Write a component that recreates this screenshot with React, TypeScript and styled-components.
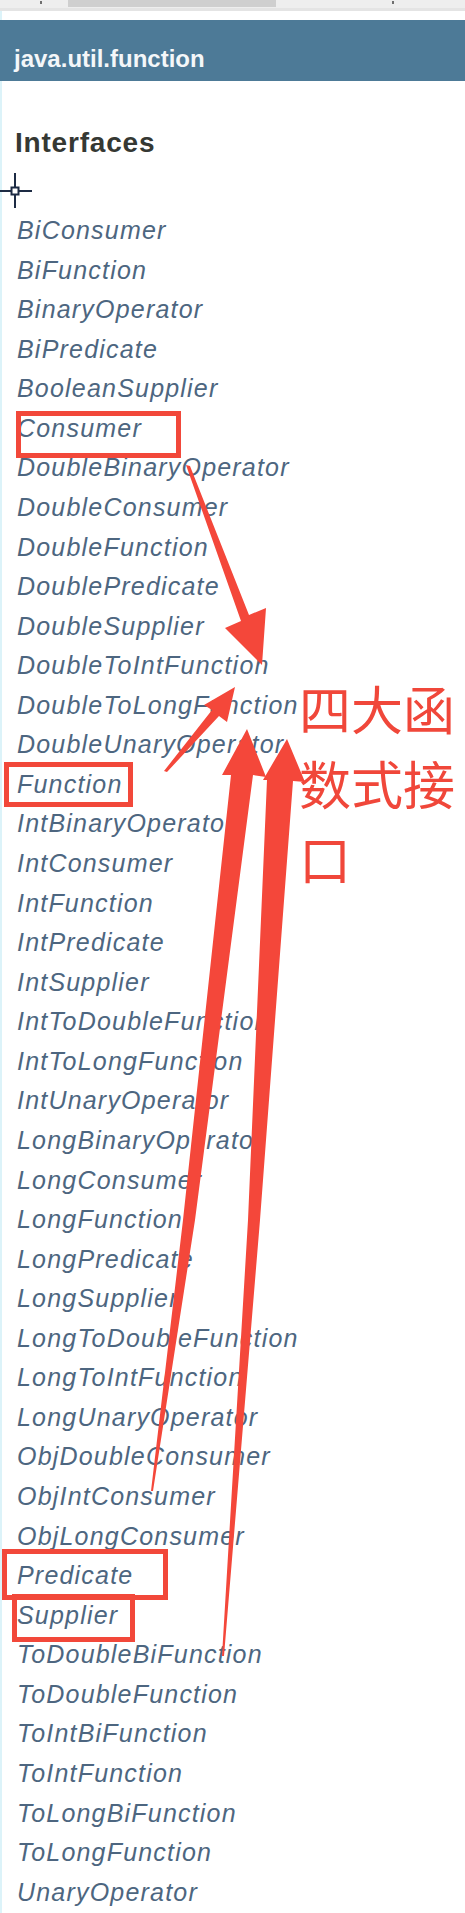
import * as React from 'react';
import styled, { createGlobalStyle } from 'styled-components';

// javadoc package frame for java.util.function, with the red annotations on top

const GlobalStyle = createGlobalStyle`
  html,
  body {
    margin: 0;
    padding: 0;
    background: #ffffff;
  }
  body {
    font-family: "Liberation Sans", Arial, sans-serif;
  }
`;

const Page = styled.div`
  position: relative;
  width: 465px;
  height: 1913px;
  overflow: hidden;
  background: #ffffff;
  box-shadow: inset 2px 0 0 #dcf3f9;
`;

const ScrollTrack = styled.div`
  display: flex;
  align-items: flex-start;
  height: 8px;
  background: #eeeeee;
  border-bottom: 3px solid #e4e4e4;
`;

const ScrollDot = styled.span<{ $ml: number }>`
  width: 2px;
  height: 3px;
  margin-left: ${(p) => p.$ml}px;
  margin-top: 1px;
  background: #6f6f6f;
`;

const ScrollThumb = styled.span`
  width: 208px;
  height: 7px;
  margin-left: 26px;
  background: #cfcfcf;
`;

const Bar = styled.div`
  box-sizing: border-box;
  height: 61px;
  margin-top: 9px;
  padding: 25px 0 0 14px;
  background: #4d7a97;
  color: #f4f7f9;
  font-size: 24px;
  font-weight: bold;
  line-height: 27px;
`;

const Title = styled.h2`
  margin: 46px 0 0;
  padding-left: 15px;
  color: #353833;
  font-size: 28px;
  font-weight: bold;
  line-height: 32px;
  letter-spacing: 0.8px;
`;

const List = styled.ul`
  margin: 52px 0 0;
  padding: 0;
  list-style: none;
`;

const Item = styled.li`
  position: relative;
  padding-left: 17px;
  height: 39.57px;
  color: #4d6680;
  font-size: 25px;
  font-style: italic;
  line-height: 39.57px;
  letter-spacing: 1.2px;
  white-space: nowrap;
`;

const Highlight = styled.span<{ $l: number; $t: number; $w: number; $h: number }>`
  position: absolute;
  left: ${(p) => p.$l}px;
  top: ${(p) => p.$t}px;
  width: ${(p) => p.$w}px;
  height: ${(p) => p.$h}px;
  box-sizing: border-box;
  border: 5px solid #f2483a;
  z-index: 2;
`;

const Cursor = styled.svg`
  position: absolute;
  left: 0;
  top: 173px;
`;

const Arrows = styled.svg`
  position: absolute;
  left: 0;
  top: 0;
  z-index: 3;
  pointer-events: none;
`;

const Note = styled.div`
  position: absolute;
  left: 299px;
  top: 670px;
  width: 165px;
  z-index: 4;
  color: #f0473a;
  font-family: "Noto Sans CJK SC", "Noto Sans", sans-serif;
  font-size: 52px;
  line-height: 75px;
`;

type Box = { l: number; t: number; w: number; h: number };

const boxes: Record<string, Box> = {
  Consumer: { l: 16, t: 2, w: 165, h: 47 },
  Function: { l: 4, t: -2.5, w: 129, h: 45 },
  Predicate: { l: 2, t: -7, w: 166, h: 51 },
  Supplier: { l: 12, t: -1.5, w: 123, h: 48 },
};

const interfaces = [
  'BiConsumer',
  'BiFunction',
  'BinaryOperator',
  'BiPredicate',
  'BooleanSupplier',
  'Consumer',
  'DoubleBinaryOperator',
  'DoubleConsumer',
  'DoubleFunction',
  'DoublePredicate',
  'DoubleSupplier',
  'DoubleToIntFunction',
  'DoubleToLongFunction',
  'DoubleUnaryOperator',
  'Function',
  'IntBinaryOperator',
  'IntConsumer',
  'IntFunction',
  'IntPredicate',
  'IntSupplier',
  'IntToDoubleFunction',
  'IntToLongFunction',
  'IntUnaryOperator',
  'LongBinaryOperator',
  'LongConsumer',
  'LongFunction',
  'LongPredicate',
  'LongSupplier',
  'LongToDoubleFunction',
  'LongToIntFunction',
  'LongUnaryOperator',
  'ObjDoubleConsumer',
  'ObjIntConsumer',
  'ObjLongConsumer',
  'Predicate',
  'Supplier',
  'ToDoubleBiFunction',
  'ToDoubleFunction',
  'ToIntBiFunction',
  'ToIntFunction',
  'ToLongBiFunction',
  'ToLongFunction',
  'UnaryOperator',
];

// tapered brush arrows, page coordinates
const arrowShapes = [
  '186,465 190,466 249,615 266,608 262,665 225,628 241,621',
  '164,771 167,772 219,716 227,722 235,687 204,705 212,710',
  '151,1491 153,1491 195,1220 253,775 266,777 247,729 222,775 231,775 183,1220',
  '222,1656 224,1656 260,1220 293,781 305,782 287,739 263,780 267,780 248,1220',
];

const App: React.FC = () => {
  return (
    <>
      <GlobalStyle />
      <Page>
        <ScrollTrack>
          <ScrollDot $ml={40} />
          <ScrollThumb />
          <ScrollDot $ml={116} />
        </ScrollTrack>
        <Bar>java.util.function</Bar>
        <Title>Interfaces</Title>
        <List>
          {interfaces.map((name) => {
            const box = boxes[name];
            return (
              <Item key={name}>
                {name}
                {box && <Highlight $l={box.l} $t={box.t} $w={box.w} $h={box.h} />}
              </Item>
            );
          })}
        </List>

        <Cursor width="34" height="36" viewBox="0 0 34 36">
          <path d="M0 18H11M19 18H32M15 0V14M15 22V35" stroke="#1d2b44" strokeWidth="2" />
          <rect x="11.5" y="14.5" width="7" height="7" fill="#fff" stroke="#1d2b44" strokeWidth="2" />
        </Cursor>

        <Arrows width="465" height="1913" viewBox="0 0 465 1913">
          {arrowShapes.map((pts) => (
            <polygon key={pts} points={pts} fill="#f4473a" />
          ))}
        </Arrows>

        <Note>四大函数式接口</Note>
      </Page>
    </>
  );
};

export default App;
